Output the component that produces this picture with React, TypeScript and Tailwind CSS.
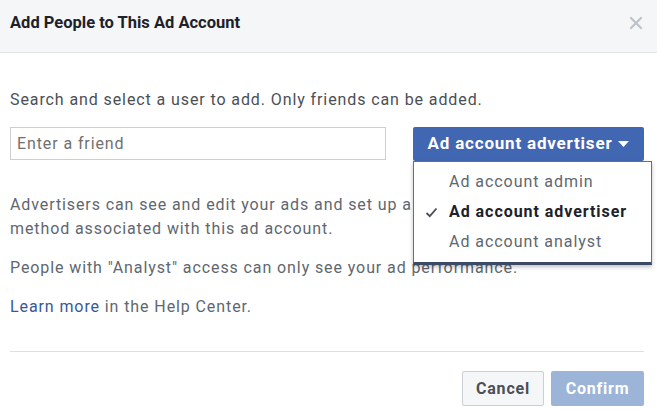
import React from "react";

export default function App() {
  return (
    <div
      className="w-[657px] h-[410px] bg-white overflow-hidden flex flex-col text-[#606770]"
      style={{ fontFamily: "Roboto, 'Liberation Sans', sans-serif" }}
    >
      <div className="h-[53px] shrink-0 bg-[#f5f6f7] border-b border-[#e5e5e5] flex items-center justify-between pl-[10px] pr-[14px]">
        <div className="text-[16.5px] font-bold text-[#1d2129] pb-[5px]">Add People to This Ad Account</div>
        <svg width="14" height="14" viewBox="0 0 14 14" className="mb-[6px]">
          <path d="M2 2 L12 12 M12 2 L2 12" stroke="#bec2c9" strokeWidth="2.2" strokeLinecap="round" />
        </svg>
      </div>
      <div className="flex flex-col px-[10px] pr-[13px]">
        <div className="mt-[35px] text-[16px] leading-[24px] tracking-[0.9px] text-[#4b4f56]">
          Search and select a user to add. Only friends can be added.
        </div>
        <div className="mt-[15px] flex items-start">
          <div className="w-[376px] h-[33px] border border-[#ccd0d5] flex items-center pl-[6px] text-[16px] tracking-[0.9px] text-[#707070]">
            Enter a friend
          </div>
          <div className="relative ml-[27px]">
            <div className="w-[231px] h-[34px] rounded-[2px] bg-[#4267b2] text-white font-bold text-[17px] tracking-[0.8px] flex items-center justify-center gap-[6px]">
              <span>Ad account advertiser</span>
              <svg width="11" height="7" viewBox="0 0 11 7">
                <path d="M0 0 L11 0 L5.5 6 Z" fill="white" />
              </svg>
            </div>
            <div className="absolute left-0 top-[34px] w-[239px] bg-white border border-[#6b7078] border-b-[3px] border-b-[#3b4a66] shadow-[0_2px_4px_rgba(0,0,0,0.25)] py-[5px] z-10 text-[16px] tracking-[0.95px]">
              <div className="h-[30px] flex items-center pl-[35px] text-[#606770]">Ad account admin</div>
              <div className="h-[30px] flex items-center text-[#1d2129] font-bold relative pl-[35px]">
                <svg width="13" height="11" viewBox="0 0 13 11" className="absolute left-[11px] top-[10px]">
                  <path d="M1.5 6 L4.8 9.2 L11.5 1.5" stroke="#4b4f56" strokeWidth="1.8" fill="none" />
                </svg>
                Ad account advertiser
              </div>
              <div className="h-[30px] flex items-center pl-[35px] text-[#606770]">Ad account analyst</div>
            </div>
          </div>
        </div>
        <div className="mt-[32px] text-[16px] leading-[24px] tracking-[0.9px] whitespace-nowrap">
          Advertisers can see and edit your ads and set up a payment
          <br />
          method associated with this ad account.
        </div>
        <div className="mt-[15px] text-[16px] leading-[24px] tracking-[0.9px]">
          People with "Analyst" access can only see your ad performance.
        </div>
        <div className="mt-[15px] text-[16px] leading-[24px] tracking-[0.9px]">
          <span className="text-[#365899]">Learn more</span> in the Help Center.
        </div>
        <div className="mt-[32px] h-px bg-[#dddfe2]" />
        <div className="mt-[19px] flex justify-end gap-[7px]">
          <div className="w-[82px] h-[35px] border border-[#ccd0d5] bg-[#f5f6f7] rounded-[2px] flex items-center justify-center font-bold text-[16px] tracking-[0.8px] text-[#4b4f56]">
            Cancel
          </div>
          <div className="w-[93px] h-[35px] bg-[#9cb4d8] rounded-[2px] flex items-center justify-center font-bold text-[16px] tracking-[0.8px] text-white">
            Confirm
          </div>
        </div>
      </div>
    </div>
  );
}
